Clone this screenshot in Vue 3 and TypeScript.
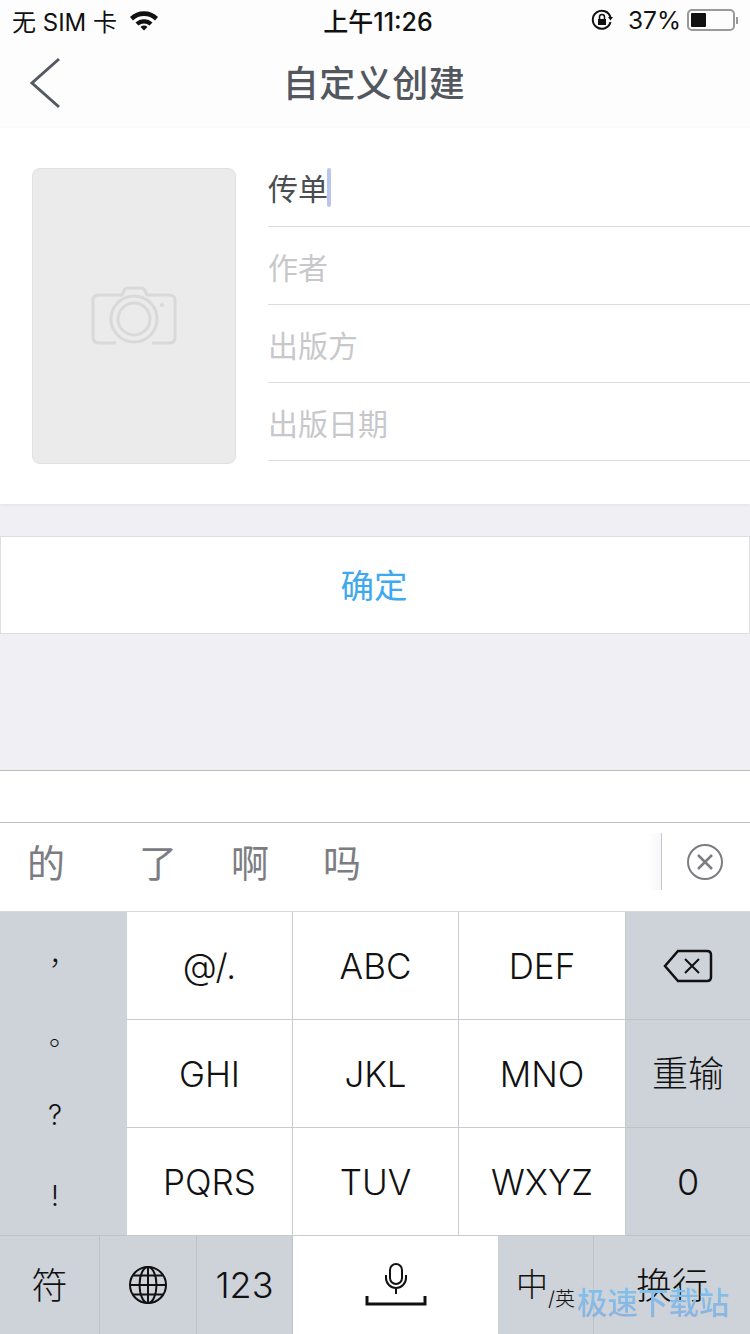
<script setup lang="ts">
const fields = [
  { label: '传单', filled: true },
  { label: '作者', filled: false },
  { label: '出版方', filled: false },
  { label: '出版日期', filled: false },
]
const candidates = ['的', '了', '啊', '吗']
const keyRows = [
  ['@/.', 'ABC', 'DEF'],
  ['GHI', 'JKL', 'MNO'],
  ['PQRS', 'TUV', 'WXYZ'],
]
const punctuation = [
  { mark: '，', wide: true },
  { mark: '。', wide: true },
  { mark: '?', wide: false },
  { mark: '!', wide: false },
]
</script>

<template>
  <main class="page">
    <header class="top">
      <div class="status">
        <div class="status-left">
          <span>无 SIM 卡</span>
          <svg class="wifi" viewBox="0 0 30 22" width="30" height="22">
            <path d="M1 8 A20 20 0 0 1 29 8 L26 11.5 A16 16 0 0 0 4 11.500 Z" fill="#111" />
            <path d="M6.500 13.500 A12.500 12.500 0 0 1 23.500 13.500 L20.500 16.500 A8.500 8.500 0 0 0 9.500 16.500 Z" fill="#111" />
            <path d="M11.500 18 A5 5 0 0 1 18.500 18 L15 21.500 Z" fill="#111" />
          </svg>
        </div>
        <span class="clock">上午11:26</span>
        <div class="status-right">
          <svg viewBox="0 0 24 24" width="24" height="24" fill="none" stroke="#111" stroke-width="2">
            <path d="M20.500 14 A9 9 0 1 1 20.500 9.500" />
            <path d="M18 9 L23 9 L20.500 12.500 Z" fill="#111" stroke="none" />
            <rect x="8" y="11" width="8" height="6" fill="#111" stroke="none" />
            <path d="M9.500 11 V9 a2.500 2.500 0 0 1 5 0 V11" stroke-width="1.500" />
          </svg>
          <span class="percent">37%</span>
          <div class="battery"><div class="battery-fill" :style="{ width: '37%' }"></div></div>
          <div class="battery-tip"></div>
        </div>
      </div>
      <nav class="nav">
        <svg class="back" viewBox="0 0 34 52" width="34" height="52" fill="none" stroke="#555960" stroke-width="3">
          <path d="M30 2 L3 26 L30 50" />
        </svg>
        <h1>自定义创建</h1>
      </nav>
    </header>

    <section class="card">
      <div class="cover">
        <svg viewBox="0 0 86 60" width="86" height="60" fill="none" stroke="#d9d9d9" stroke-width="3">
          <path d="M25 57 H8 Q2 57 2 51 V14 Q2 9 8 9 H31 L34 3 Q35 2 37 2 H50 Q52 2 53 3 L56 9 H78 Q84 9 84 14 V51 Q84 57 78 57 H61" />
          <circle cx="43" cy="33" r="23" />
          <circle cx="43" cy="33" r="16" />
          <circle cx="71" cy="19" r="2" fill="#d9d9d9" stroke="none" />
        </svg>
      </div>
      <div class="fields">
        <div v-for="field in fields" :key="field.label" class="field" :class="{ filled: field.filled }">
          <span>{{ field.label }}</span>
          <i v-if="field.filled" class="caret"></i>
        </div>
      </div>
    </section>

    <button class="confirm" type="button"><span>确定</span></button>
    <div class="spacer"></div>

    <section class="keyboard">
      <div class="blank-bar"></div>
      <div class="candidates">
        <span v-for="word in candidates" :key="word" class="candidate">{{ word }}</span>
        <div class="clear">
          <svg viewBox="0 0 36 36" width="36" height="36" fill="none" stroke="#7b7d82" stroke-width="2">
            <circle cx="18" cy="18" r="17" />
            <path d="M11 11 L25 25 M25 11 L11 25" stroke-width="2.500" />
          </svg>
        </div>
      </div>
      <div class="keys">
        <div class="punct">
          <span v-for="item in punctuation" :key="item.mark" :class="{ wide: item.wide }">{{ item.mark }}</span>
        </div>
        <div class="letter-keys">
          <template v-for="row in keyRows" :key="row[0]">
            <button v-for="key in row" :key="key" class="key" type="button">{{ key }}</button>
          </template>
        </div>
        <div class="side-keys">
          <button class="key dark" type="button">
            <svg viewBox="0 0 50 34" width="50" height="34" fill="none" stroke="#111" stroke-width="2.500">
              <path d="M15 2 H44 Q48 2 48 6 V28 Q48 32 44 32 H15 L2 17 Z" />
              <path d="M22 10 L36 24 M36 10 L22 24" stroke-width="2" />
            </svg>
          </button>
          <button class="key dark cjk" type="button">重输</button>
          <button class="key dark" type="button">0</button>
        </div>
      </div>
      <div class="bottom-row">
        <button class="key dark w-99 cjk" type="button">符</button>
        <button class="key dark w-97" type="button">
          <svg viewBox="0 0 40 40" width="40" height="40" fill="none" stroke="#111" stroke-width="2">
            <circle cx="20" cy="20" r="18" />
            <ellipse cx="20" cy="20" rx="8.500" ry="18" />
            <path d="M20 2 V38 M2 20 H38 M5 10.500 H35 M5 29.500 H35" />
          </svg>
        </button>
        <button class="key dark w-96" type="button">123</button>
        <button class="key w-205" type="button">
          <svg viewBox="0 0 62 44" width="62" height="44" fill="none" stroke="#111" stroke-width="2">
            <rect x="25" y="1" width="12" height="20" rx="6" />
            <path d="M21 12 V15 a10 10 0 0 0 20 0 V12 M31 25 V31" />
            <path d="M2 33 V41 H60 V33" stroke-width="3" />
          </svg>
        </button>
        <button class="key dark w-96 lang" type="button"><span>中</span><small>/英</small></button>
        <button class="key dark grow cjk" type="button">换行</button>
      </div>
      <div class="watermark">极速下载站</div>
    </section>
  </main>
</template>

<style scoped>
.page {
  width: 750px;
  height: 1334px;
  overflow: hidden;
  display: flex;
  flex-direction: column;
  background: #efeff4;
  font-family: 'Inter', 'Noto Sans CJK SC', sans-serif;
  color: #111;
}

.page > * {
  flex: none;
  box-sizing: border-box;
}

.top {
  height: 128px;
  background: #fdfdfd;
}

.status {
  height: 40px;
  padding: 0 12px;
  display: flex;
  align-items: center;
  justify-content: space-between;
  position: relative;
  font-size: 24px;
}

.status-left,
.status-right {
  display: flex;
  align-items: center;
}

.status-left {
  gap: 12px;
}

.clock {
  position: absolute;
  left: 6px;
  right: 0;
  text-align: center;
  font-size: 25px;
  font-weight: 500;
  pointer-events: none;
}

.percent {
  margin: 0 6px 0 14px;
  font-size: 24.5px;
}

.battery {
  width: 48px;
  height: 22px;
  border: 2px solid #999;
  border-radius: 5px;
  padding: 2px;
  box-sizing: border-box;
}

.battery-fill {
  height: 100%;
  background: #111;
  border-radius: 1px;
}

.battery-tip {
  width: 2px;
  height: 7px;
  background: #999;
  margin-left: 1px;
}

.nav {
  height: 88px;
  position: relative;
  display: flex;
  align-items: center;
  justify-content: center;
  padding: 0 2px 6px 0;
  box-sizing: border-box;
}

.back {
  position: absolute;
  left: 29px;
  top: 17px;
}

.nav h1 {
  margin: 0;
  font-size: 36px;
  font-weight: 500;
  color: #53575e;
  letter-spacing: 0.5px;
}

.card {
  height: 376px;
  padding: 40px 0 0 32px;
  display: flex;
  gap: 32px;
  background: #fff;
  box-shadow: 0 1px 4px rgba(0, 0, 0, 0.06);
}

.cover {
  width: 204px;
  height: 296px;
  box-sizing: border-box;
  background: #ebebeb;
  border: 1px solid #e2e2e2;
  border-radius: 8px;
  display: flex;
  align-items: center;
  justify-content: center;
}

.fields {
  flex: 1;
  margin-top: -20px;
}

.field {
  height: 78px;
  border-bottom: 1px solid #dcdcdf;
  box-sizing: border-box;
  display: flex;
  align-items: center;
  font-size: 30px;
  color: #c8c8cc;
}

.field:first-child {
  height: 79px;
}

.field.filled {
  color: #4a4d52;
}

.caret {
  width: 4px;
  height: 39px;
  background: #b9c5ec;
  border-radius: 2px;
  margin-left: -1px;
}

.confirm {
  height: 98px;
  margin: 32px 0 0;
  padding: 0 2px 4px 0;
  background: #fff;
  border: 1px solid #dedee2;
  font: inherit;
  font-size: 33.500px;
  color: #3fa9ee;
}

.spacer {
  height: 136px;
}

.keyboard {
  position: relative;
  height: 564px;
  background: #fff;
  border-top: 1px solid #bdbdbf;
}

.blank-bar {
  height: 52px;
  border-bottom: 1px solid #bdbdbf;
  box-sizing: border-box;
}

.candidates {
  height: 89px;
  display: flex;
  align-items: center;
  position: relative;
  border-bottom: 1px solid #d8d8db;
  box-sizing: border-box;
  padding-bottom: 13px;
}

.candidate {
  font-size: 38px;
  color: #7b7d82;
  width: 92px;
  text-align: center;
}

.candidate:first-child {
  margin-right: 20px;
}

.clear {
  position: absolute;
  right: 0;
  top: 10px;
  height: 57px;
  width: 89px;
  box-sizing: border-box;
  border-left: 1px solid #8d8e92;
  padding-right: 2px;
  display: flex;
  align-items: center;
  justify-content: center;
}

.clear::before {
  content: '';
  position: absolute;
  left: -14px;
  top: 0;
  bottom: 0;
  width: 14px;
  background: linear-gradient(90deg, rgba(240, 240, 245, 0), rgba(240, 240, 245, 0.6));
}

.keys {
  display: flex;
  height: 324px;
}

.punct {
  width: 127px;
  flex: none;
  background: #ced2d9;
  border-bottom: 1px solid #bfc2c8;
  display: flex;
  flex-direction: column;
  align-items: center;
  padding-right: 17px;
  box-sizing: border-box;
}

.punct span {
  height: 81px;
  flex: none;
  display: flex;
  align-items: center;
  justify-content: center;
  font-size: 28px;
  font-weight: 300;
}

.punct span.wide {
  padding-left: 16px;
}

.letter-keys {
  width: 499px;
  flex: none;
  display: grid;
  grid-template-columns: 166px 166px 167px;
  grid-template-rows: 108px 108px 108px;
}

.letter-keys .key {
  font-size: 35px;
}

.side-keys {
  flex: 1;
  display: grid;
  grid-template-rows: 108px 108px 108px;
}

.key {
  padding: 0;
  margin: 0;
  border: 0;
  border-right: 1px solid #c9cbd0;
  border-bottom: 1px solid #c9cbd0;
  background: #fff;
  font: inherit;
  font-size: 36px;
  font-weight: 300;
  color: #111;
  display: flex;
  align-items: center;
  justify-content: center;
  box-sizing: border-box;
}

.key.dark {
  background: #ced2d9;
  border-color: #bfc2c8;
}

.key.cjk {
  padding-bottom: 5px;
}

.side-keys .key {
  border-right: 0;
}

.bottom-row {
  display: flex;
  height: 98px;
}

.bottom-row .key {
  border-bottom: 0;
  flex: none;
}

.w-99 {
  width: 100px;
}

.w-97 {
  width: 97px;
}

.w-96 {
  width: 96px;
}

.w-205 {
  width: 205px;
  border-right: 0;
}

.bottom-row .grow {
  flex: 1;
  border-right: 0;
}

.key.lang {
  align-items: flex-end;
  padding-bottom: 27px;
}

.lang span {
  font-size: 32px;
  line-height: 44px;
}

.lang small {
  font-size: 20px;
  line-height: 24px;
  margin-bottom: -4px;
}

.watermark {
  position: absolute;
  left: 577px;
  top: 513px;
  font-size: 30.500px;
  line-height: 38px;
  font-weight: 500;
  white-space: nowrap;
  background: linear-gradient(180deg, #7cc4ee 0%, #8fb0dd 100%);
  -webkit-background-clip: text;
  background-clip: text;
  color: transparent;
}
</style>
